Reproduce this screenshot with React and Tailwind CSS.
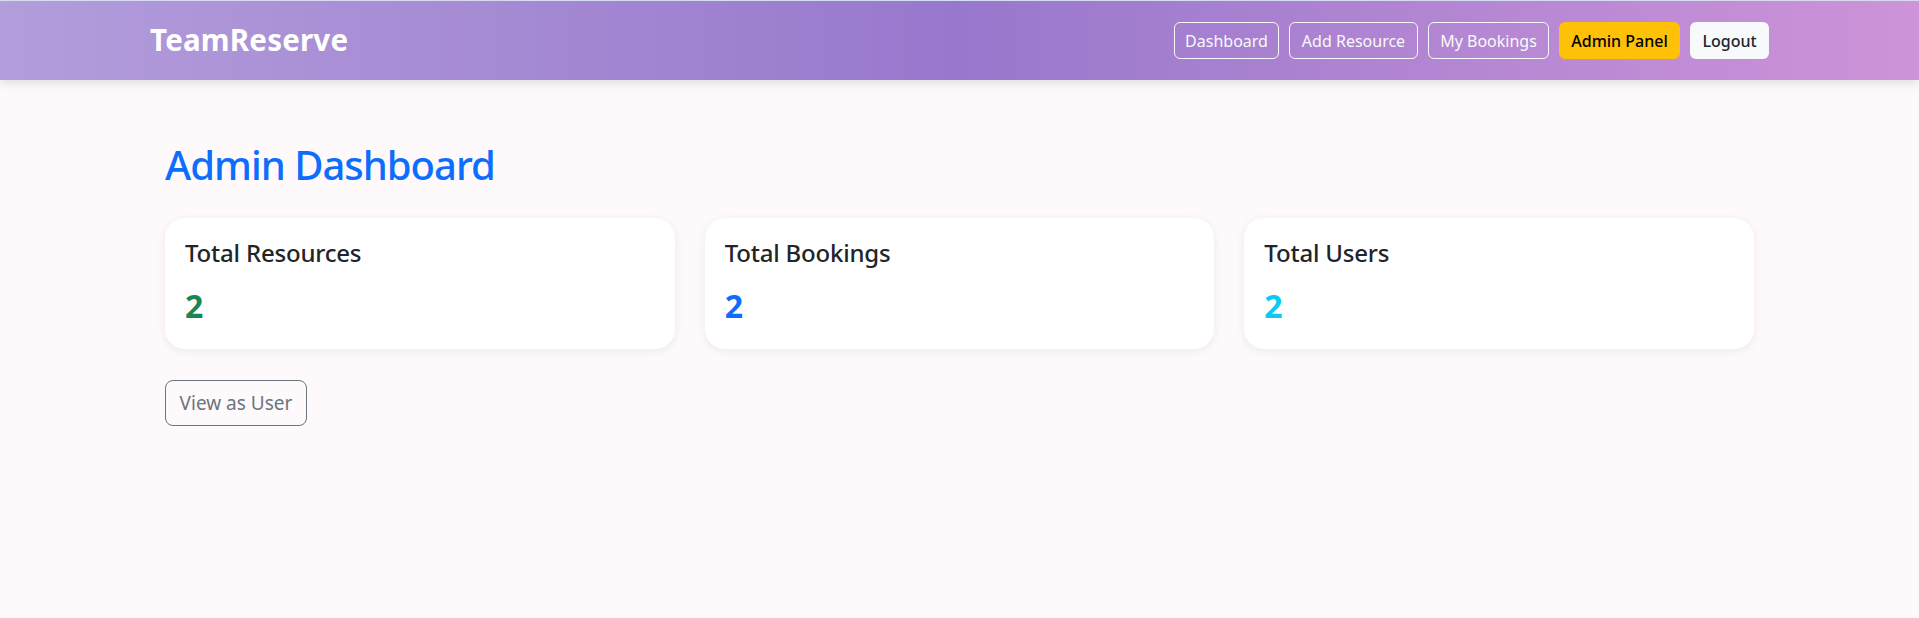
import React from "react";

const navLinks = [
  { label: "Dashboard", w: "w-[105px]" },
  { label: "Add Resource", w: "w-[129px]" },
  { label: "My Bookings", w: "w-[121px]" },
];

const stats = [
  { title: "Total Resources", value: 2, color: "text-[#198754]" },
  { title: "Total Bookings", value: 2, color: "text-[#0d6efd]" },
  { title: "Total Users", value: 2, color: "text-[#0dcaf0]" },
];

export default function App() {
  return (
    <div
      className="min-h-[618px] bg-[#fef9fa]"
      style={{ fontFamily: '"Segoe UI", "Noto Sans", "Open Sans", sans-serif' }}
    >
      {/* NAVBAR */}
      <nav className="relative z-10 h-[80px] flex items-center justify-between px-[150px] border-t border-[#d5dbf0] bg-gradient-to-r from-[#b39ddb] via-[#9878cd] to-[#ce93d8] shadow-[0_3px_10px_rgba(0,0,0,0.12)]">
        <span className="text-[29.5px] font-bold text-white tracking-[0.2px]">
          TeamReserve
        </span>

        <div className="flex items-center gap-[10px]">
          {navLinks.map((l) => (
            <button
              key={l.label}
              className={`${l.w} h-[37px] flex items-center justify-center rounded-[6px] border border-[#f8f9fa] text-[16px] text-[#f8f9fa]`}
            >
              {l.label}
            </button>
          ))}
          <button className="w-[121px] h-[37px] flex items-center justify-center rounded-[6px] border border-[#ffc107] bg-[#ffc107] text-[16px] font-medium text-black">
            Admin Panel
          </button>
          <button className="w-[79px] h-[37px] flex items-center justify-center rounded-[6px] bg-[#f8f9fa] text-[16px] font-medium text-[#212529]">
            Logout
          </button>
        </div>
      </nav>

      {/* CONTENT */}
      <main className="px-[165px] pt-[61px]">
        <h1 className="text-[40px] leading-[48px] font-medium tracking-[-1px] text-[#0d6efd] mb-[29px]">
          Admin Dashboard
        </h1>

        <div className="grid grid-cols-3 gap-[30px]">
          {stats.map((s) => (
            <div
              key={s.title}
              className="h-[131px] bg-white rounded-[20px] px-[20px] pt-[20px] shadow-[0_2px_10px_rgba(0,0,0,0.07)]"
            >
              <h4 className="text-[24px] leading-[29px] font-medium tracking-[-0.2px] text-[#212529]">
                {s.title}
              </h4>
              <p className={`mt-[20px] text-[32px] leading-[38px] font-bold ${s.color}`}>
                {s.value}
              </p>
            </div>
          ))}
        </div>

        <button className="mt-[31px] w-[142px] h-[46px] flex items-center justify-center rounded-[8px] border border-[#6c757d] text-[19px] text-[#6c757d]">
          View as User
        </button>
      </main>
    </div>
  );
}
